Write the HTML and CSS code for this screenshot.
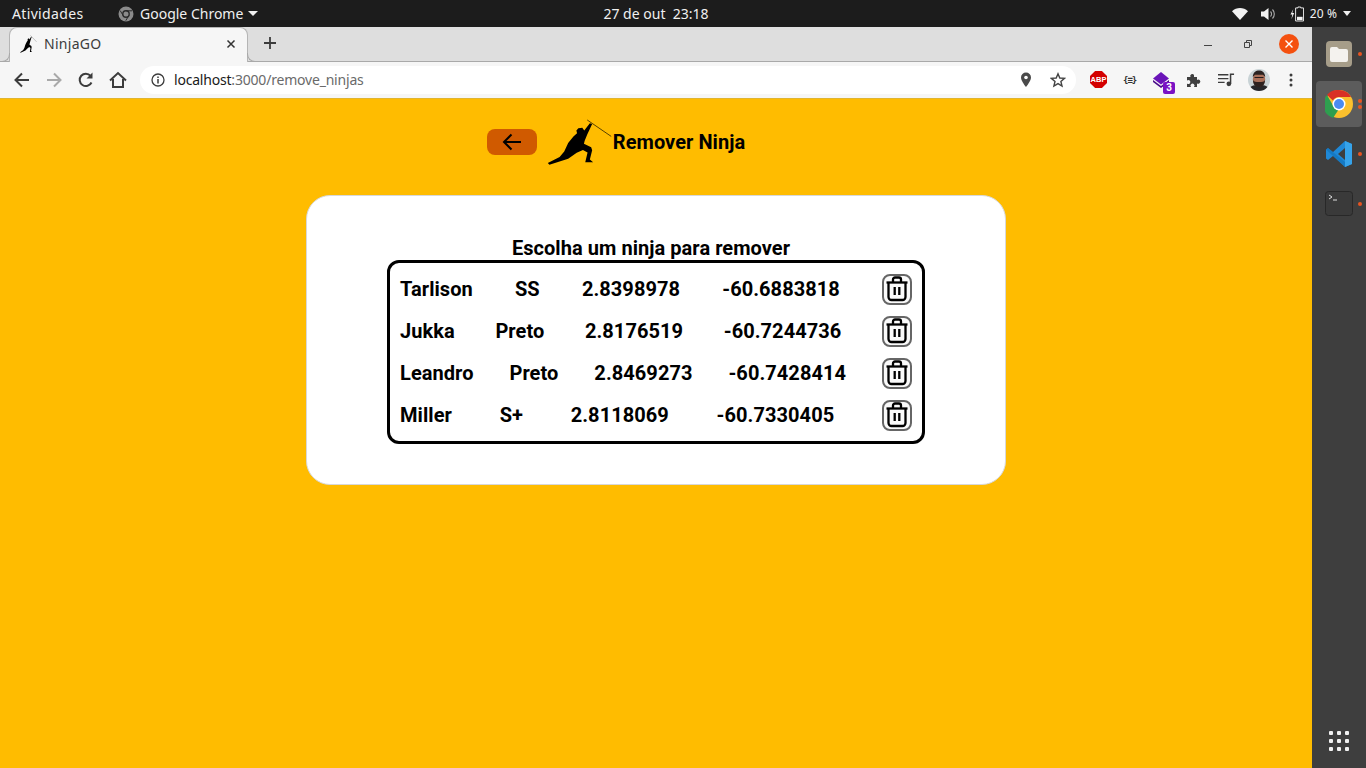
FILE: index.html
```html
<!DOCTYPE html>
<html lang="pt-BR">
<head>
<meta charset="utf-8">
<title>NinjaGO</title>
<link rel="stylesheet" href="styles.css">
</head>
<body>
<header class="topbar">
  <div class="topbar-left">
    <span class="activities">Atividades</span>
    <span class="app-menu">
      <svg class="app-glyph" width="16" height="16" viewBox="0 0 16 16"><circle cx="8" cy="8" r="7.5" fill="#8b8b8b"/><circle cx="8" cy="8" r="3.2" fill="none" stroke="#2a2a2a" stroke-width="1.4"/><path d="M8 4.8h6M10.8 9.6l-3 5M5.2 9.6l-3-5" stroke="#2a2a2a" stroke-width="1"/></svg>
      <span>Google Chrome</span>
      <i class="caret"></i>
    </span>
  </div>
  <div class="clock">27 de out&nbsp;&nbsp;23:18</div>
  <div class="topbar-right">
    <svg width="16" height="12" viewBox="0 0 16 12"><path d="M0 3.2C4.5-1 11.5-1 16 3.2L8 12z" fill="#f2f2f2"/></svg>
    <svg class="ind-sound" width="15" height="14" viewBox="0 0 15 14"><path d="M0 4.5h3L7.5 1v12L3 9.500H0z" fill="#f2f2f2"/><path d="M9.500 4.500a3.500 3.500 0 0 1 0 5M11.500 2.500a6.500 6.500 0 0 1 0 9" fill="none" stroke="#aaa" stroke-width="1.100"/></svg>
    <svg class="ind-batt" width="14" height="16" viewBox="0 0 15 16"><path d="M3.500 3 0.500 8.500h2l-1 5 3-6.500h-2z" fill="#f2f2f2"/><path d="M8.500 .5h3v1h3v14h-8.500v-14h2.500z" fill="none" stroke="#f2f2f2"/><rect x="7.500" y="11" width="6" height="3.500" fill="#f2f2f2"/></svg>
    <span class="batt-text">20 %</span>
    <i class="caret"></i>
  </div>
</header>

<div class="desktop">
  <div class="browser">
    <div class="tabstrip">
      <div class="tab">
        <svg class="favicon" width="17" height="18" viewBox="200 25 200 140" preserveAspectRatio="none"><use href="#ninja"/></svg>
        <span class="tab-title">NinjaGO</span>
        <svg class="tab-close" width="10" height="10" viewBox="0 0 10 10"><path d="M1.500 1.500l7 7M8.500 1.500l-7 7" stroke="#333" stroke-width="1.500"/></svg>
      </div>
      <svg class="newtab" width="14" height="14" viewBox="0 0 14 14"><path d="M7 1v12M1 7h12" stroke="#3c3c3c" stroke-width="1.800"/></svg>
      <div class="winctl">
        <svg class="win-min" width="10" height="10" viewBox="0 0 10 10"><path d="M1 6.500h8" stroke="#444" stroke-width="1"/></svg>
        <svg class="win-max" width="10" height="10" viewBox="0 0 10 10"><path d="M1.500 3.500h5v5h-5zM3.500 3V1.500h5v5H7" fill="none" stroke="#444" stroke-width="1"/></svg>
        <span class="win-close"><svg width="10" height="10" viewBox="0 0 10 10"><path d="M1.500 1.500l7 7M8.500 1.500l-7 7" stroke="#fff" stroke-width="1.400"/></svg></span>
      </div>
    </div>

    <div class="toolbar">
      <svg class="tb-btn" width="18" height="18" viewBox="0 0 18 18"><path d="M16 9H3M9 2.500 2.500 9 9 15.500" fill="none" stroke="#3c3c3c" stroke-width="2"/></svg>
      <svg class="tb-btn" width="18" height="18" viewBox="0 0 18 18"><path d="M2 9h13M9 2.500 15.500 9 9 15.500" fill="none" stroke="#a9a9a9" stroke-width="2"/></svg>
      <svg class="tb-btn" width="18" height="18" viewBox="0 0 18 18"><path d="M14.500 11.500A6.200 6.200 0 1 1 13.600 4.800" fill="none" stroke="#3c3c3c" stroke-width="2"/><path d="M15.500 1.500v6h-6z" fill="#3c3c3c"/></svg>
      <svg class="tb-btn" width="18" height="18" viewBox="0 0 18 18"><path d="M1 9.500 9 2l8 7.500M4 8v8h10V8" fill="none" stroke="#3c3c3c" stroke-width="2"/></svg>
      <div class="omnibox">
        <svg class="info" width="14" height="14" viewBox="0 0 14 14"><circle cx="7" cy="7" r="6" fill="none" stroke="#3c3c3c" stroke-width="1.300"/><path d="M7 6v4.500M7 3.400v1.500" stroke="#3c3c3c" stroke-width="1.500"/></svg>
        <span class="url"><span class="url-host">localhost</span>:3000/remove_ninjas</span>
        <svg class="omni-pin" width="12" height="16" viewBox="0 0 12 16"><path d="M6 .5A5 5 0 0 0 1 5.500C1 9 6 15 6 15s5-6 5-9.500A5 5 0 0 0 6 .5z" fill="#4a4a4a"/><circle cx="6" cy="5.500" r="1.800" fill="#fff"/></svg>
        <svg class="omni-star" width="16" height="16" viewBox="0 0 16 16"><path d="M8 1.800 9.800 6l4.700.4-3.600 3 1.100 4.600L8 11.600 3.900 14 5 9.400l-3.600-3L6.200 6z" fill="none" stroke="#444" stroke-width="1.400"/></svg>
      </div>
      <div class="extensions">
        <span class="abp">ABP</span>
        <span class="jsonview">{≡}</span>
        <span class="stack">
          <svg width="17" height="16" viewBox="0 0 17 16"><path d="M0 6.500 8 0l8 6.500-8 6z" fill="#6a14b8"/><path d="M0 8l8 6 8-6v2l-8 6-8-6z" fill="#4a0d8a"/></svg>
          <b class="stack-badge">3</b>
        </span>
        <svg class="puzzle" width="16" height="16" viewBox="0 0 16 16"><path d="M1 5h3.500a2 2 0 1 1 3.500-2V5h3v3a2 2 0 1 1 2.500 3.200 2 2 0 0 1-2.500.3V15H8a2 2 0 1 0-3 0H1v-3.500a2 2 0 1 0 0-3z" fill="#3f3f3f"/></svg>
        <svg class="playlist" width="17" height="14" viewBox="0 0 18 14"><path d="M0 1.500h11M0 5.500h11M0 9.500h7" stroke="#3c3c3c" stroke-width="1.500"/><circle cx="11.500" cy="11" r="2.500" fill="#3c3c3c"/><path d="M13.300 11V1H17" fill="none" stroke="#3c3c3c" stroke-width="1.600"/></svg>
        <svg class="avatar" width="22" height="22" viewBox="0 0 22 22"><defs><clipPath id="av"><circle cx="11" cy="11" r="11"/></clipPath></defs><g clip-path="url(#av)"><rect width="22" height="22" fill="#c9d3d6"/><path d="M0 22c1-5 5-6 11-6s10 1 11 6z" fill="#26262a"/><ellipse cx="11" cy="10.500" rx="6.200" ry="7" fill="#a9705a"/><path d="M4.800 8C5 3 8 1.500 11 1.500S17 3 17.200 8L15 5.800H7z" fill="#2b2322"/><path d="M5 11c1 2 3 2 6 2s5 0 6-2c0 5-3 7-6 7s-6-2-6-7z" fill="#2d2220"/><path d="M6.500 8.500h9" stroke="#241c1c" stroke-width="1.200"/></g></svg>
        <svg class="kebab" width="4" height="14" viewBox="0 0 4 14"><circle cx="2" cy="2" r="1.500" fill="#3c3c3c"/><circle cx="2" cy="7" r="1.500" fill="#3c3c3c"/><circle cx="2" cy="12" r="1.500" fill="#3c3c3c"/></svg>
      </div>
    </div>

    <main class="page">
      <div class="page-head">
        <button class="back" type="button" aria-label="Voltar">
          <svg width="24" height="24" viewBox="0 0 24 24"><path d="M21 12H4M11.500 4.500 4 12l7.500 7.500" fill="none" stroke="#000" stroke-width="2" /></svg>
        </button>
        <svg class="ninja" width="66" height="46" viewBox="200 25 200 140">
          <g id="ninja">
            <path d="M202 159 238 141 252 124 264 98 280 78 291 68 289 60 295 53 307 52 313 60 330 38 337 40 322 72 314 92 312 100 334 111 337 120 330 148 340 157 316 157 323 127 309 119 290 128 264 146 207 164Z" fill="#000"/>
            <path d="M322 28 395 78" stroke="#000" stroke-width="2" fill="none"/>
          </g>
        </svg>
        <h1 class="page-title">Remover Ninja</h1>
      </div>

      <section class="card">
        <h2 class="card-title">Escolha um ninja para remover</h2>
        <ul class="ninja-list">
          <li class="ninja-row">
            <span>Tarlison</span><span>SS</span><span>2.8398978</span><span>-60.6883818</span>
            <button class="trash" type="button" aria-label="Remover"><svg width="24" height="26" viewBox="0 0 24 26"><use href="#trash-icon"/></svg></button>
          </li>
          <li class="ninja-row">
            <span>Jukka</span><span>Preto</span><span>2.8176519</span><span>-60.7244736</span>
            <button class="trash" type="button" aria-label="Remover"><svg width="24" height="26" viewBox="0 0 24 26"><use href="#trash-icon"/></svg></button>
          </li>
          <li class="ninja-row">
            <span>Leandro</span><span>Preto</span><span>2.8469273</span><span>-60.7428414</span>
            <button class="trash" type="button" aria-label="Remover"><svg width="24" height="26" viewBox="0 0 24 26"><use href="#trash-icon"/></svg></button>
          </li>
          <li class="ninja-row">
            <span>Miller</span><span>S+</span><span>2.8118069</span><span>-60.7330405</span>
            <button class="trash" type="button" aria-label="Remover"><svg width="24" height="26" viewBox="0 0 24 26"><use href="#trash-icon"/></svg></button>
          </li>
        </ul>
      </section>
      <svg class="defs" width="0" height="0"><defs>
        <g id="trash-icon" fill="none" stroke="#000" stroke-width="2.300">
          <path d="M1.500 6.500h21"/>
          <path d="M8 6V3.500a2 2 0 0 1 2-2h4a2 2 0 0 1 2 2V6"/>
          <path d="M3.500 6.500V21a3 3 0 0 0 3 3h11a3 3 0 0 0 3-3V6.500"/>
          <path d="M9.700 11v8M14.300 11v8"/>
        </g>
      </defs></svg>
    </main>
  </div>

  <aside class="dock">
    <div class="dock-item">
      <svg width="26" height="26" viewBox="0 0 26 26"><rect width="26" height="26" rx="4" fill="#a69d89"/><path d="M4 8a2 2 0 0 1 2-2h5l2 2h7a2 2 0 0 1 2 2v9a2 2 0 0 1-2 2H6a2 2 0 0 1-2-2z" fill="#f4f2ee"/></svg>
      <i class="dot"></i>
    </div>
    <div class="dock-item active">
      <svg width="28" height="28" viewBox="0 0 28 28"><circle cx="14" cy="14" r="14" fill="#fbc02d"/><path d="M14 0a14 14 0 0 1 12.100 7H14a7 7 0 0 0-6.100 3.500L2 5a14 14 0 0 1 12-5z" fill="#d93025"/><path d="M2 5l6 10.500a7 7 0 0 0 6 3.500L8 28A14 14 0 0 1 2 5z" fill="#2e9e4f"/><circle cx="14" cy="14" r="6.500" fill="#fff"/><circle cx="14" cy="14" r="5" fill="#4a8bf0"/></svg>
      <span class="dots"><i class="dot"></i><i class="dot"></i></span>
    </div>
    <div class="dock-item">
      <svg width="28" height="28" viewBox="0 0 28 28"><path d="M20 1 27 4v20l-7 3L8 16l-5 4-2-1.500V9.500L3 8l5 4z" fill="#1f88d6"/><path d="M20 1 27 4v20l-7 3z" fill="#36a3ea"/><path d="M20 8v12l-7-6z" fill="#3e3e3e"/><path d="M1 9.500 3 8l17 14v5L1 9.500z" fill="#0f6fb5" opacity=".6"/></svg>
      <i class="dot"></i>
    </div>
    <div class="dock-item">
      <svg width="28" height="26" viewBox="0 0 28 26"><rect x=".5" y=".5" width="27" height="24" rx="3" fill="#3a3a3a" stroke="#282828"/><path d="M4 4l3 2-3 2M8 9h4" fill="none" stroke="#ddd" stroke-width="1"/></svg>
      <i class="dot"></i>
    </div>
    <div class="dock-grid">
      <i></i><i></i><i></i><i></i><i></i><i></i><i></i><i></i><i></i>
    </div>
  </aside>
</div>
</body>
</html>
```

FILE: styles.css
```css
* { box-sizing: border-box; }
html, body { margin: 0; height: 100%; }
body {
  width: 1366px;
  height: 768px;
  overflow: hidden;
  display: flex;
  flex-direction: column;
  font-family: "Noto Sans", "Liberation Sans", sans-serif;
  background: #ffbc00;
}
i { display: block; }

/* GNOME top bar */
.topbar {
  height: 27px;
  flex: none;
  background: #1c1c1c;
  color: #f0f0f0;
  font-size: 14px;
  display: grid;
  grid-template-columns: 1fr auto 1fr;
  align-items: center;
  padding: 0 15px 0 12px;
}
.topbar-left { display: flex; align-items: center; }
.activities { width: 106px; letter-spacing: 0.35px; }
.app-menu { display: flex; align-items: center; }
.app-glyph { margin-right: 6px; }
.caret {
  width: 0;
  height: 0;
  border-left: 5px solid transparent;
  border-right: 5px solid transparent;
  border-top: 5px solid #f0f0f0;
}
.app-menu .caret { margin-left: 5px; }
.clock { font-size: 14px; padding-right: 51px; }
.topbar-right { display: flex; align-items: center; justify-content: flex-end; }
.ind-sound { margin-left: 13px; }
.ind-batt { margin-left: 14px; }
.batt-text { font-size: 12px; margin-left: 6px; letter-spacing: 0.1px; }
.topbar-right .caret { margin-left: 6px; border-left-width: 4.5px; border-right-width: 4.5px; }

/* layout */
.desktop { flex: 1; display: flex; min-height: 0; }
.browser { width: 1312px; display: flex; flex-direction: column; }

/* tab strip */
.tabstrip {
  height: 35px;
  flex: none;
  background: #dedede;
  border-bottom: 1px solid #a9a9a9;
  display: flex;
  align-items: center;
  padding-left: 9px;
}
.tab {
  position: relative;
  width: 239px;
  height: 35px;
  margin-top: 1px;
  background: #f6f6f6;
  border: 1px solid #b5b5b5;
  border-bottom: none;
  border-radius: 8px 8px 0 0;
  display: flex;
  align-items: center;
  padding: 0 11px 3px 10px;
  font-size: 14px;
  color: #3c3c3c;
}
.tab::before, .tab::after {
  content: "";
  position: absolute;
  bottom: 0;
  width: 8px;
  height: 8px;
  border-bottom: 1px solid #a9a9a9;
}
.tab::before { left: -9px; border-right: 1px solid #a9a9a9; border-radius: 0 0 8px 0; }
.tab::after { right: -9px; border-left: 1px solid #a9a9a9; border-radius: 0 0 0 8px; }
.favicon { flex: none; margin-right: 7px; }
.tab-title { flex: 1; font-size: 14px; letter-spacing: 0.3px; }
.tab-close { flex: none; }
.newtab { flex: none; margin-left: 15px; margin-bottom: 3px; }
.winctl { margin-left: auto; display: flex; align-items: center; padding-right: 13px; }
.win-max { margin-left: 30px; }
.win-close {
  margin-left: 26px;
  width: 20px;
  height: 20px;
  border-radius: 50%;
  background: #f4500f;
  display: flex;
  align-items: center;
  justify-content: center;
}

/* toolbar */
.toolbar {
  height: 37px;
  flex: none;
  background: #f6f6f6;
  border-bottom: 1px solid #e0b530;
  display: flex;
  align-items: center;
  padding: 0 0 1px 13px;
}
.tb-btn { flex: none; margin-right: 14px; }
.omnibox {
  flex: none;
  width: 936px;
  height: 28px;
  margin-left: -1px;
  background: #fff;
  border-radius: 14px;
  display: flex;
  align-items: center;
  padding: 0 10px 0 11px;
}
.info { flex: none; margin-right: 9px; }
.url { flex: 1; font-size: 14px; color: #6a6a6a; letter-spacing: -0.2px; }
.url-host { color: #1a1a1a; }
.omni-pin { flex: none; margin-right: 18px; }
.omni-star { flex: none; }
.extensions { flex: 1; display: flex; align-items: center; padding-left: 14px; }
.abp {
  width: 17px;
  height: 17px;
  background: #d30000;
  clip-path: polygon(30% 0, 70% 0, 100% 30%, 100% 70%, 70% 100%, 30% 100%, 0 70%, 0 30%);
  color: #fff;
  font: bold 7.5px "Liberation Sans", sans-serif;
  display: flex;
  align-items: center;
  justify-content: center;
}
.jsonview {
  margin-left: 16px;
  width: 16px;
  font: bold 9px "DejaVu Sans Mono", monospace;
  color: #333;
  letter-spacing: -1px;
}
.stack { position: relative; margin-left: 14px; display: flex; }
.stack-badge {
  position: absolute;
  right: -5px;
  bottom: -6px;
  width: 12px;
  height: 12px;
  background: #7a12c4;
  color: #fff;
  border-radius: 2px;
  font: bold 10px/12px "Roboto", sans-serif;
  text-align: center;
}
.puzzle { margin-left: 16px; }
.playlist { margin-left: 16px; }
.avatar { margin-left: 13px; }
.kebab { margin-left: 19px; }

/* page */
.page { flex: 1; background: #ffbc00; font-family: Roboto, "Liberation Sans", sans-serif; color: #000; }
.page-head {
  display: flex;
  align-items: center;
  justify-content: center;
  padding: 20px 80px 0 0;
  height: 66px;
}
.back {
  width: 50px;
  height: 26px;
  margin-top: 0;
  padding: 0;
  border: none;
  border-radius: 8px;
  background: #d05a00;
  display: flex;
  align-items: center;
  justify-content: center;
}
.ninja { margin: 0 0 0 10px; flex: none; }
.page-title { margin: 0; font-size: 20px; font-weight: 700; letter-spacing: 0.05px; }
.defs { position: absolute; }

.card {
  width: 700px;
  height: 290px;
  margin: 30px auto 0;
  background: #fff;
  border: 1px solid #d8d8d8;
  border-radius: 24px;
  display: flex;
  flex-direction: column;
  align-items: center;
  padding-top: 41px;
}
.card-title {
  margin: 0;
  font-size: 20px;
  line-height: 23px;
  font-weight: 700;
  padding-right: 10px;
  letter-spacing: 0.05px;
}
.ninja-list {
  list-style: none;
  width: 538px;
  height: 184px;
  margin: 0;
  padding: 5px 10px 0;
  border: 3px solid #000;
  border-radius: 12px;
}
.ninja-row {
  height: 42px;
  display: flex;
  align-items: center;
  justify-content: space-between;
  font-size: 20px;
  font-weight: 700;
  letter-spacing: 0.06px;
}
.trash {
  width: 30px;
  height: 31px;
  padding: 0;
  background: #fafafa;
  border: 2px solid #666;
  border-radius: 8px;
  display: flex;
  align-items: center;
  justify-content: center;
}

/* dock */
.dock {
  width: 54px;
  flex: none;
  background: #3e3e3e;
  display: flex;
  flex-direction: column;
  align-items: center;
  padding-top: 4px;
}
.dock-item {
  position: relative;
  width: 46px;
  height: 46px;
  margin-bottom: 4px;
  border-radius: 4px;
  display: flex;
  align-items: center;
  justify-content: center;
}
.dock-item.active { background: #5c5c5c; }
.dot {
  width: 4px;
  height: 4px;
  border-radius: 50%;
  background: #e95420;
}
.dock-item > .dot { position: absolute; right: 0; top: 21px; }
.dots {
  position: absolute;
  right: 0;
  top: 18px;
  display: flex;
  flex-direction: column;
  gap: 2px;
}
.dock-grid {
  margin-top: auto;
  margin-bottom: 17px;
  display: grid;
  grid-template-columns: repeat(3, 4px);
  gap: 4px;
}
.dock-grid i { width: 4px; height: 4px; background: #f2f2f2; border-radius: 1px; }
```
